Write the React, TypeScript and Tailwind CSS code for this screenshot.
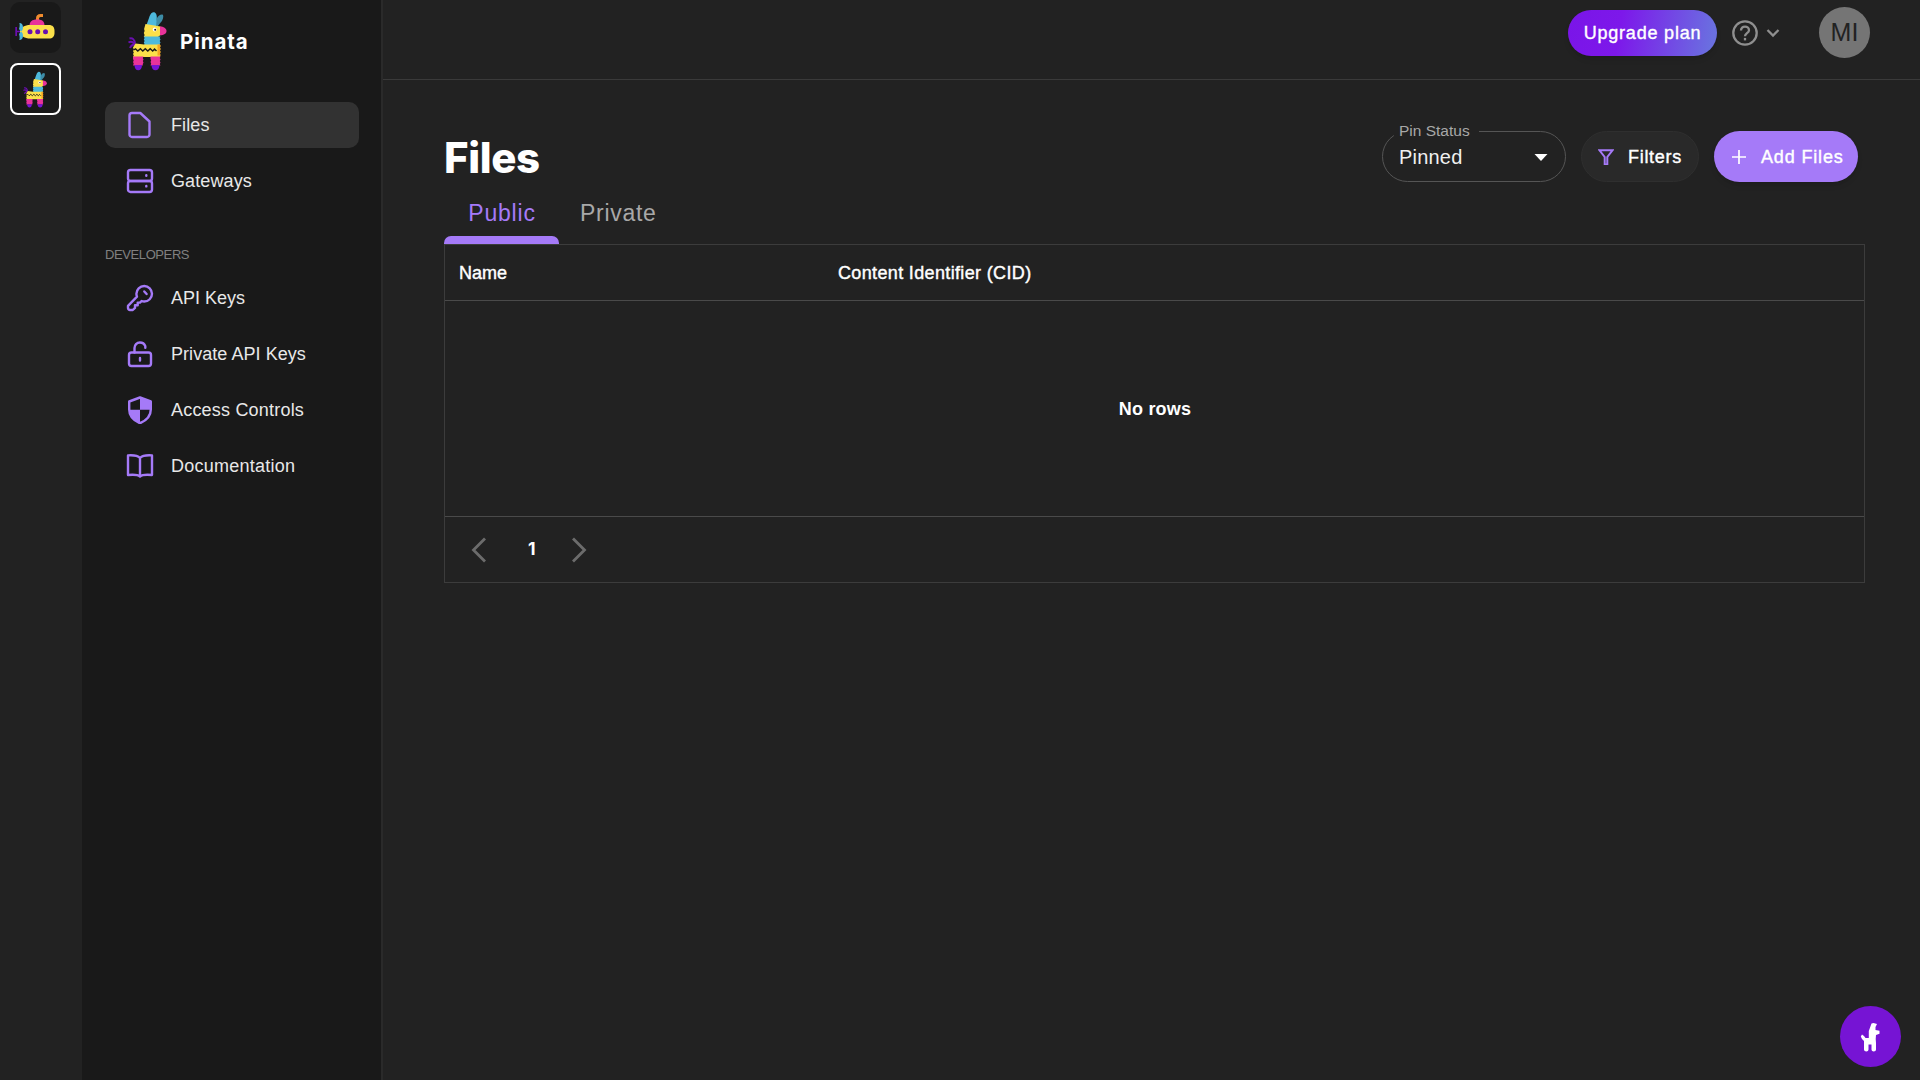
import React from "react";

function Llama({ className }: { className: string }) {
  return (
    <svg viewBox="0 0 40 60" className={className} fill="none">
      <path d="M1.500 27.500c3-1 5 1 5.500 5M0.500 31.500c2.500-1.500 5-.5 6 2M2 37c1-2.500 3-3.500 5-3" stroke="#6A0FB0" strokeWidth="2" />
      <path d="M34.500 3.500c1.500 1 .5 5-1 7L29 16l-2-3 2-6c1.500-2.500 3.500-4 5.500-3.500z" fill="#3D8CA6" />
      <path d="M24.500 1.500c3-1 4.500 2 4.300 5.500L28 15.500l-9.500-1.500L21 7c.7-2 1.700-5 3.500-5.500z" fill="#4DB9DC" />
      <path d="M17.500 13L32.500 15.500v8.500L30 26H15.800l.8-2-.8-2 .8-2-.5-2z" fill="#FBE04A" />
      <path d="M32 15.500c3.500 0 6.500 2 6.500 4.500S36 24.300 32 24.300z" fill="#E8339A" />
      <circle cx="26.700" cy="18.500" r="2" fill="#fff" />
      <circle cx="27.200" cy="18.700" r="1" fill="#181818" />
      <path d="M15.800 25.500h16.700l-.8 1.500.8 1.500-.8 1.500.8 1.500-.8 1.500.5 1.500H15.800l.8-1.500-.8-1.500.8-1.500-.8-1.500.8-1.500z" fill="#4DB9DC" />
      <path d="M7.500 32.500L16 33.500h15.500l.8 1.500-.8 1.500.8 1.500-.8 1.500.8 1.500-.8 1.500.8 2.500-.5 1H5l.8-1.500-.8-1.500.8-1.500-.8-1.500.8-1.500-.8-2z" fill="#FBE04A" />
      <path d="M29.500 33.500h2.500l.8 1.500-.8 1.500.8 1.500-.8 1.500.8 1.500-.8 1.500.8 2h-3.300z" fill="#F5A623" />
      <path d="M5.500 39l2-1.200 2.300 2.300 2.600-2.300 2.400 2.300 2.500-2.300 2.500 2.300 2.400-2.300 2.500 2.300L26.500 38l2 2" stroke="#181818" strokeWidth="1.400" />
      <path d="M5 45.500h10.500l-.7 1.500.7 1.500-.7 1.500.7 1.500-.7 1.500v1.500H5l.7-2-.7-1.500.7-1.500-.7-1.500z" fill="#E8339A" />
      <path d="M22.500 45.500h10l-.7 1.500.7 1.500-.7 1.500.7 1.500-.7 1.500.7 1.500h-10l.7-2-.7-1.500.7-1.500-.7-1.500z" fill="#E8339A" />
      <path d="M6.500 54h7.500c0 3.500-1.500 5.300-3.700 5.300S6.500 57.500 6.500 54zM23.500 54h8c0 3.500-1.700 5.300-4 5.300s-4-1.800-4-5.300z" fill="#7614D4" />
    </svg>
  );
}

function Submarine() {
  return (
    <svg viewBox="0 0 40 28" className="mb-[1px] mr-[1px] h-[28px] w-[40px]" fill="none">
      <path d="M22.500 8.500V5.500c0-2 1-3 3-3h2.500" stroke="#F08C2E" strokeWidth="3" />
      <path d="M14.500 12.500c0-4 3-6 7-6h1.500c4 0 6.500 2 6.500 6z" fill="#E8339A" />
      <path d="M0.300 14h1.700v9H0.300z" fill="#6A0FB0" />
      <path d="M1.500 18.500H5" stroke="#6A0FB0" strokeWidth="1.500" />
      <path d="M5 18.500c0-4 5-6.500 10-6.500h19c3.500 0 5.500 2 5.500 6v1.500c0 4-2 6-5.500 6H15c-5 0-10-2.500-10-7z" fill="#FBE04A" />
      <path d="M4.300 10c2.700 0 3.700 2 3.700 4.500 0 2-.7 3-2 4 1.300 1 2 2 2 4 0 2.500-1 4.500-3.700 4.500.8-2 .2-4.500-.3-6l2-2.500-2-2.500c.5-1.500 1.100-4 .3-6z" fill="#4DB9DC" />
      <circle cx="15" cy="18.700" r="2.500" fill="#6A0FB0" />
      <circle cx="22.700" cy="18.700" r="2.500" fill="#6A0FB0" />
      <circle cx="30.500" cy="18.700" r="2.500" fill="#6A0FB0" />
    </svg>
  );
}

const icons: Record<string, React.ReactNode> = {
  file: <path d="M6 2h8.300L23.500 10.500V23.500a2.500 2.500 0 0 1-2.500 2.500H6a2.500 2.500 0 0 1-2.500-2.500V4.500A2.500 2.500 0 0 1 6 2z" />,
  server: (
    <>
      <rect x="2" y="3" width="24" height="11" rx="2.500" />
      <rect x="2" y="14" width="24" height="11" rx="2.500" />
      <path d="M20.300 8.300v.4M20.300 19v.4" strokeWidth="2.400" />
    </>
  ),
  key: (
    <>
      <path d="M18.200 2c4.300 0 7.800 3.500 7.800 7.800s-3.500 7.700-7.800 7.700c-1 0-1.800-.2-2.600-.5L14 18.600h-2.300v2.600H9v2.700L6.800 26H4a2 2 0 0 1-2-2v-2.200l9-9.100c-.4-.9-.6-1.900-.6-2.900C10.400 5.500 13.900 2 18.200 2z" />
      <path d="M18.300 7.500l2.300 2.500" />
    </>
  ),
  lock: (
    <>
      <rect x="3" y="12.500" width="22" height="13.500" rx="2.500" />
      <path d="M8.500 12.500V8c0-3 2.300-5.500 5.400-5.500 2.600 0 4.600 1.500 5.400 3.700v1.500M14 18v2.500" />
    </>
  ),
  shield: (
    <>
      <path d="M14 1.500l10.800 4v8c0 6.500-4.500 11-10.800 13.700C7.700 24.500 3.200 20 3.200 13.500v-8z" />
      <path d="M14 1.500l10.800 4v8.300H14zM14 13.800v13.400C7.700 24.500 3.500 20 3.200 13.800z" fill="#A57AF8" stroke="none" />
    </>
  ),
  book: <path d="M14 6c-2-2.200-6-3-12-2.600V23c5-.5 10-.3 12 1.500 2-1.800 7-2 12-1.500V3.400C20 3 16 3.800 14 6zM14 6v18" />,
};

function NavItem({ icon, label, active, tracking = "tracking-[0.100px]" }: { icon: string; label: string; active?: boolean; tracking?: string }) {
  return (
    <div className={`flex h-[46px] w-[254px] items-center rounded-[10px] pl-[21px] ${active ? "bg-[#323232]" : ""}`}>
      <svg viewBox="0 0 28 28" className="h-7 w-7" fill="none" stroke="#A57AF8" strokeWidth="2.400" strokeLinejoin="round" strokeLinecap="round">
        {icons[icon]}
      </svg>
      <span className={`ml-[17px] text-[18px] leading-[22px] text-[#e8e8e8] ${tracking}`}>{label}</span>
    </div>
  );
}

export default function App() {
  return (
    <div className="relative flex h-[1080px] w-[1920px] overflow-hidden bg-[#222222] font-['Liberation_Sans',Arial,sans-serif] text-white">
      <div className="flex w-[82px] shrink-0 flex-col gap-[10px] pl-[10px] pt-[2px]">
        <div className="flex h-[51px] w-[51px] items-center justify-center rounded-[10px] bg-[#191919]">
          <Submarine />
        </div>
        <div className="flex h-[52px] w-[51px] items-center justify-center rounded-[8px] border-2 border-white bg-[#191919]">
          <Llama className="h-[37px] w-[25px]" />
        </div>
      </div>

      <aside className="w-[301px] shrink-0 border-r-2 border-[#2a2a2a] bg-[#191919] pl-[23px]">
        <div className="flex h-[102px] pl-[23px] pt-[11px]">
          <Llama className="h-[60px] w-[40px]" />
          <span className="ml-[12px] mt-[17px] font-['Inter',sans-serif] text-[20.500px] font-bold leading-[28px] tracking-[0.950px]">Pinata</span>
        </div>
        <nav className="flex flex-col gap-[10px]">
          <NavItem icon="file" label="Files" active />
          <NavItem icon="server" label="Gateways" />
        </nav>
        <div className="mb-[13px] mt-[43px] h-[15px] text-[13px] leading-[15px] tracking-[-0.400px] text-[#808080]">DEVELOPERS</div>
        <nav className="flex flex-col gap-[10px]">
          <NavItem icon="key" label="API Keys" tracking="tracking-normal" />
          <NavItem icon="lock" label="Private API Keys" tracking="tracking-[0.050px]" />
          <NavItem icon="shield" label="Access Controls" tracking="tracking-[0.200px]" />
          <NavItem icon="book" label="Documentation" tracking="tracking-[0.250px]" />
        </nav>
      </aside>

      <div className="flex min-w-0 flex-1 flex-col">
        <header className="flex h-[80px] shrink-0 items-start justify-end border-b border-[#3a3a3a] pr-[50px] pt-[7px]">
          <button className="mt-[3px] h-[46px] w-[149px] rounded-full bg-[linear-gradient(100deg,#7a15e8_0%,#7d18ea_35%,#6a6fe0_95%)] text-[18px] font-normal tracking-[0.800px] shadow-md [-webkit-text-stroke:0.400px_white]">
            Upgrade plan
          </button>
          <svg viewBox="0 0 26 26" className="ml-[15px] mt-[13px] h-[26px] w-[26px]" fill="none" stroke="#8f8f8f" strokeWidth="2.300">
            <circle cx="13" cy="13" r="11.700" />
            <path d="M9 10.500c0-2.300 1.700-3.900 4-3.900s4 1.500 4 3.600c0 2.900-4 3.100-4 6" />
            <path d="M13 17.900v2.500" />
          </svg>
          <svg viewBox="0 0 14 10" className="ml-[8px] mt-[21px] h-[10px] w-[14px]" fill="none" stroke="#8f8f8f" strokeWidth="2.300">
            <path d="M1.500 2L7 7.500 12.500 2" />
          </svg>
          <div className="ml-[39px] flex h-[51px] w-[51px] items-center justify-center rounded-full bg-[#757575] text-[25px] text-[#222]">MI</div>
        </header>

        <main className="pl-[61px]">
          <div className="flex h-[118px] justify-between pr-[62px] pt-[51px]">
            <h1 className="font-['Inter',sans-serif] text-[42px] font-extrabold leading-[54px] tracking-[-0.400px]">Files</h1>
            <div className="flex">
              <div className="relative flex h-[51px] w-[184px] items-center justify-between rounded-full border border-[#555] pl-[16px] pr-[17px]">
                <span className="absolute left-[11px] top-[-14px] h-[18px] w-[85px] bg-[#222222] pl-[5px] text-[15.500px] leading-[26px] text-[#a8a8a8]">Pin Status</span>
                <span className="text-[20px] tracking-[0.200px] text-[#f0f0f0]">Pinned</span>
                <svg viewBox="0 0 14 7" className="mt-px h-[7px] w-[14px]" fill="#fff">
                  <path d="M0.500 0h13L7 7z" />
                </svg>
              </div>
              <button className="ml-[15px] flex h-[51px] w-[118px] items-center rounded-full border border-[#2f2f2f] bg-[#292929] pl-[16px] pt-px text-[18px] tracking-[0.700px] [-webkit-text-stroke:0.400px_white]">
                <svg viewBox="0 0 16 16" className="mr-[14px] h-[16px] w-[16px]" fill="none" stroke="#A57AF8" strokeWidth="2">
                  <path d="M1.500 1.300h13L9.300 8v7.500H6.700V8z" />
                </svg>
                Filters
              </button>
              <button className="ml-[15px] flex h-[51px] w-[144px] items-center rounded-full bg-[#A57AF8] pl-[18px] pt-px text-[18px] tracking-[0.850px] shadow-md [-webkit-text-stroke:0.400px_white]">
                <svg viewBox="0 0 14 14" className="mr-[15px] h-[14px] w-[14px]" fill="none" stroke="#fff" strokeWidth="1.700">
                  <path d="M7 0v14M0 7h14" />
                </svg>
                Add Files
              </button>
            </div>
          </div>

          <div className="flex h-[46px] text-[23px] leading-[31px] tracking-[0.800px]">
            <div className="flex h-[46px] w-[115px] flex-col items-center justify-between text-[#A57AF8]">
              <span className="pl-px">Public</span>
              <span className="h-[8px] w-full rounded-t-[7px] bg-[#A57AF8]" />
            </div>
            <div className="ml-[21px] tracking-[0.700px] text-[#a8a8a8]">Private</div>
          </div>

          <section className="h-[339px] w-[1421px] border border-[#3c3c3c]">
            <div className="flex h-[56px] items-center border-b border-[#4a4a4a] pl-[14px] pt-[2px] text-[18px] [-webkit-text-stroke:0.400px_white]">
              <span className="w-[379px]">Name</span>
              <span className="tracking-[0.350px]">Content Identifier (CID)</span>
            </div>
            <div className="flex h-[216px] items-center justify-center border-b border-[#4a4a4a] pl-px pt-[2px] text-[18px] font-bold tracking-[0.200px]">No rows</div>
            <div className="flex h-[65px] items-center pl-[26px]">
              <svg viewBox="0 0 15 26" className="h-[26px] w-[15px]" fill="none" stroke="#6c6c6c" strokeWidth="2.800">
                <path d="M14 1.500L2.500 13 14 24.500" />
              </svg>
              <span className="mb-[1px] ml-[42px] w-[10px] font-['Inter',sans-serif] text-[17.500px] font-bold">1</span>
              <svg viewBox="0 0 15 26" className="ml-[34px] h-[26px] w-[15px]" fill="none" stroke="#6c6c6c" strokeWidth="2.800">
                <path d="M1 1.500L12.500 13 1 24.500" />
              </svg>
            </div>
          </section>
        </main>
      </div>

      <div className="absolute bottom-[13px] right-[19px] flex h-[61px] w-[61px] items-center justify-center rounded-full bg-[#7614D4]">
        <svg viewBox="0 0 20 30" className="mr-[1px] h-[30px] w-[20px]" fill="#fff">
          <path d="M11.500 1.500l2-.5 3.500 1-1.500 3v3l4 .7v3l-3.500 1.300-.3 4 .3 4v6.500c0 1.300-1 2-2.200 2s-2.300-.7-2.300-2V22.500H8.500v5c0 1.300-1 2-2.200 2s-2.300-.7-2.300-2V19L2 17 0.800 14.500 2 12.500l2 1.500 1.500 2H8.800V9z" />
        </svg>
      </div>
    </div>
  );
}
